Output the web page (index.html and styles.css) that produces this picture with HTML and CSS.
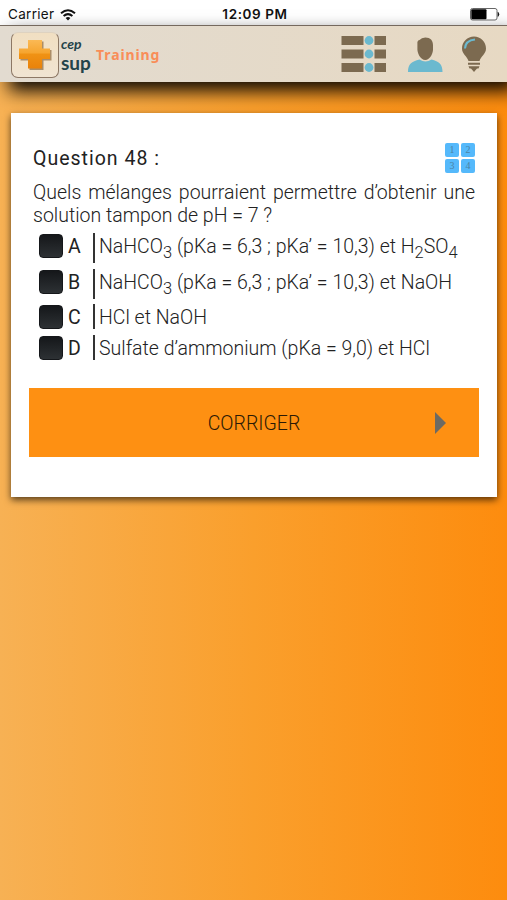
FILE: index.html
```html
<!DOCTYPE html>
<html lang="fr">
<head>
  <meta charset="UTF-8" />
  <meta name="viewport" content="width=device-width, initial-scale=1" />
  <title>Cep Sup Training</title>
  <link rel="stylesheet" href="styles.css">
</head>
<body>
  <div class="status-bar">
    <div class="carrier">
      <span>Carrier</span>
      <svg width="16" height="12" viewBox="0 0 16 12" fill="none" stroke="#111" stroke-width="2">
        <path d="M1 4.2 Q8 -1.8 15 4.2" />
        <path d="M3.6 7 Q8 3.2 12.4 7" />
        <path d="M5.6 9 L8 11.6 L10.4 9 Q8 7.2 5.6 9 Z" fill="#111" stroke="none" />
      </svg>
    </div>
    <div class="clock">12:09 PM</div>
    <div class="battery">
      <svg width="30" height="13" viewBox="0 0 30 13">
        <rect x="0.5" y="0.5" width="26.5" height="11.5" rx="2" fill="#fff" stroke="#666" />
        <rect x="1.3" y="1.3" width="15.2" height="10" rx="1" fill="#000" />
        <path d="M28 4.3 Q30 6.3 28 8.4 Z" fill="#111" stroke="#111" stroke-width="0.6" />
      </svg>
    </div>
  </div>

  <header class="header">
    <div class="brand">
      <div class="logo">
        <svg width="36" height="36" viewBox="0 0 36 36">
          <defs>
            <linearGradient id="cross" x1="0" y1="0" x2="0" y2="1">
              <stop offset="0" stop-color="#fbb955" />
              <stop offset="0.45" stop-color="#f6a52f" />
              <stop offset="0.5" stop-color="#f09214" />
              <stop offset="1" stop-color="#e9820a" />
            </linearGradient>
          </defs>
          <path d="M12.500 4.500h14v8.500h8v10.500h-8v9.500h-14v-9.500h-9v-10.500h9z" fill="#8f6a3c" opacity="0.7" />
          <path d="M11 3h14v8.500h8v10.500h-8v9.500h-14v-9.500h-9v-10.500h9z" fill="url(#cross)" />
        </svg>
      </div>
      <div class="brand-name">
        <span class="cep">cep</span>
        <span class="sup">sup</span>
      </div>
      <span class="training">Training</span>
    </div>
    <nav class="menu">
      <svg width="45" height="36" viewBox="0 0 45 36">
        <g fill="#7c6a50">
          <path d="M0.500 0h22v9h-22zM33.500 0h11.500v9h-11.500z" />
          <path d="M0.500 13.500h22v9h-22zM33.500 13.500h11.500v9h-11.500z" />
          <path d="M0.500 27h22v9h-22zM33.500 27h11.500v9h-11.500z" />
        </g>
        <g fill="#6bb9cf">
          <circle cx="28" cy="4.500" r="4.400" />
          <circle cx="28" cy="18" r="4.400" />
          <circle cx="28" cy="31.500" r="4.400" />
        </g>
      </svg>
      <svg width="35" height="35" viewBox="0 0 35 35">
        <path d="M0 35C0 27 3.500 24.500 11.500 22.500Q17.500 26.500 23.500 22.500C31 24.500 34.500 27 34.500 35Z" fill="#6bb9cf" />
        <path d="M17.300 0.500C22.500 0.500 25 3.500 25 8V11C25.500 16 22 23 17.300 23C12.500 23 9 16 9.400 11V5Q10 3 11.500 3Q13.500 0.500 17.300 0.500Z" fill="#7c6a50" />
      </svg>
      <svg width="24" height="36" viewBox="0 0 24 36">
        <path d="M12 0.500C18.500 0.500 24 5.500 24 12.500C24 18 19 20 17.500 25H6.500C5 20 0 18 0 12.500C0 5.500 5.500 0.500 12 0.500Z" fill="#7c6a50" />
        <path d="M6 26.700H18V28.700H6zM6.500 30.300H17.500L16.500 32.400H15L12 36L9 32.400H7.500Z" fill="#7c6a50" />
        <path d="M3 12.500Q3.300 4.500 13 3.500" fill="none" stroke="#6bb9cf" stroke-width="2" />
      </svg>
    </nav>
  </header>

  <main class="card">
    <div class="card-head">
      <h1>Question 48 :</h1>
      <div class="grid-icon">
        <span>1</span><span>2</span><span>3</span><span>4</span>
      </div>
    </div>
    <div class="question">
      <p class="line-full">Quels mélanges pourraient permettre d’obtenir une</p>
      <p>solution tampon de pH = 7 ?</p>
    </div>

    <div class="answers">
      <div class="answer tall">
        <span class="box"></span><span class="letter">A</span>
        <span class="text">NaHCO<sub>3</sub> (pKa = 6,3 ; pKa’ = 10,3) et H<sub>2</sub>SO<sub>4</sub></span>
      </div>
      <div class="answer tall">
        <span class="box"></span><span class="letter">B</span>
        <span class="text">NaHCO<sub>3</sub> (pKa = 6,3 ; pKa’ = 10,3) et NaOH</span>
      </div>
      <div class="answer">
        <span class="box"></span><span class="letter">C</span>
        <span class="text">HCl et NaOH</span>
      </div>
      <div class="answer">
        <span class="box"></span><span class="letter">D</span>
        <span class="text">Sulfate d’ammonium (pKa = 9,0) et HCl</span>
      </div>
    </div>

    <button type="button" class="submit">
      <span>CORRIGER</span>
      <i class="arrow"></i>
    </button>
  </main>
</body>
</html>
```
FILE: styles.css
```css
* {
  box-sizing: border-box;
}

body {
  margin: 0;
  height: 900px;
  overflow: hidden;
  font-family: Roboto, sans-serif;
  font-weight: 300;
  color: #222;
  background: linear-gradient(to right, #f7b154, #fa9f2c 50%, #fd8c0e);
}

.status-bar {
  height: 25px;
  padding: 0 7px 0 8px;
  display: grid;
  grid-template-columns: 1fr auto 1fr;
  align-items: center;
  background: #fff;
  font-family: Inter, sans-serif;
  font-weight: 400;
  line-height: 25px;
  color: #111;
}

.carrier {
  display: flex;
  align-items: center;
  gap: 6px;
  padding-top: 2px;
  font-size: 13.5px;
  letter-spacing: 0.3px;
}

.clock {
  padding: 2px 0 0 2px;
  font-size: 13.5px;
  font-weight: 600;
  letter-spacing: 0.6px;
}

.battery {
  display: flex;
  justify-content: flex-end;
  padding-top: 2px;
}

.header {
  height: 57px;
  padding: 0 21px 0 11px;
  display: flex;
  align-items: center;
  justify-content: space-between;
  background: linear-gradient(to right, #e2dbd0, #e7d9c3);
  border-top: 1.5px solid #75695e;
  box-shadow: 9px 9px 17px rgba(0, 0, 0, 0.95);
}

.brand {
  display: flex;
  align-items: center;
  padding-top: 1px;
}

.logo {
  width: 48px;
  height: 46px;
  display: flex;
  align-items: center;
  justify-content: center;
  border: 1px solid #8d7865;
  border-top-color: #ded2c0;
  border-radius: 7px;
  background: linear-gradient(#f1dfc2, #f0e4d2);
}

.brand-name {
  display: flex;
  flex-direction: column;
  margin-left: 2px;
  width: 35px;
  font-family: Lato, sans-serif;
  color: #23434a;
}

.cep {
  font-size: 14px;
  line-height: 15px;
  font-weight: 700;
  font-style: italic;
}

.sup {
  font-size: 19px;
  line-height: 23px;
  font-weight: 700;
}

.training {
  font-family: "Noto Sans", sans-serif;
  font-size: 14px;
  font-weight: 700;
  letter-spacing: 0.9px;
  color: #f98d58;
}

.menu {
  display: flex;
  align-items: center;
}

.menu svg:nth-child(2) {
  margin: 0 19px 0 22px;
}

.card {
  height: 384px;
  margin: 31px 10px 0 11px;
  padding: 29px 18px 0;
  background: #fff;
  box-shadow: 0 3px 7px rgba(0, 0, 0, 0.65);
}

.card-head {
  display: flex;
  justify-content: space-between;
  padding: 0 4px;
  height: 39px;
}

.card-head h1 {
  margin: 0;
  font-size: 19.5px;
  line-height: 33px;
  font-weight: 400;
  letter-spacing: 1px;
}

.grid-icon {
  width: 30px;
  height: 30px;
  margin-top: 1px;
  display: grid;
  grid-template-columns: 1fr 1fr;
  gap: 2px;
}

.grid-icon span {
  background: #55b9fb;
  border-radius: 2px;
  font-family: "Liberation Serif", serif;
  font-size: 10px;
  line-height: 14px;
  text-align: center;
  color: #4b83a5;
}

.question {
  padding: 0 4px;
  font-size: 19.5px;
  line-height: 23px;
}

.question p {
  margin: 0;
}

.question .line-full {
  text-align-last: justify;
  white-space: nowrap;
}

.answers {
  margin-top: 6px;
  padding-left: 10px;
  height: 132px;
  font-size: 19.5px;
}

.answer {
  display: flex;
  align-items: flex-start;
  height: 25px;
  margin-bottom: 5.500px;
  line-height: 27px;
}

.answer.tall {
  height: 30px;
}

.box {
  width: 24px;
  height: 24px;
  margin-top: 1px;
  border-radius: 4px;
  border: 1px solid #15171a;
  background: linear-gradient(#15171a, #2d3134);
}

.letter {
  width: 30px;
  padding-left: 5px;
  font-weight: 400;
}

.text {
  height: 100%;
  padding-left: 4px;
  border-left: 2px solid #333;
  white-space: nowrap;
}

sub {
  font-size: 16.5px;
  line-height: 0;
  vertical-align: -5px;
}

.submit {
  width: 450px;
  height: 69px;
  margin-top: 23px;
  padding: 1px 33px 0 60px;
  display: flex;
  align-items: center;
  border: none;
  background: #fe9012;
  font-family: Roboto, sans-serif;
  font-size: 19.5px;
  font-weight: 300;
  color: #2b1a05;
  cursor: pointer;
}

.submit span {
  flex: 1;
  text-align: center;
  padding-right: 16px;
}

.arrow {
  border-left: 11px solid #6c6a63;
  border-top: 11px solid transparent;
  border-bottom: 11px solid transparent;
}
```
